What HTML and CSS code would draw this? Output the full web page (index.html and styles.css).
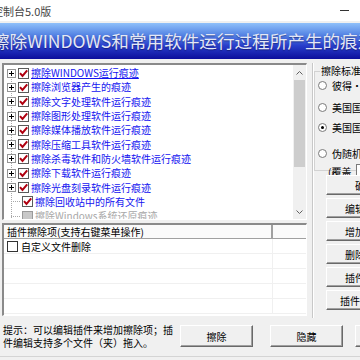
FILE: index.html
```html
<!DOCTYPE html>
<html lang="zh-CN">
<head>
    <meta charset="UTF-8">
    <title>控制台5.0版</title>
    <link rel="stylesheet" href="styles.css">
</head>
<body>
    <div class="titlebar">
        <span class="title">控制台5.0版</span>
        <span class="minimize"></span>
    </div>

    <div class="banner">
        <span class="banner-text">擦除WINDOWS和常用软件运行过程所产生的痕迹</span>
    </div>

    <div class="main">
        <div class="left">
            <div class="tree">
                <div class="tree-items">
                    <div class="node"><span class="expander"></span><svg class="check" width="11" height="11" viewBox="0 0 11 11"><rect x="0.5" y="0.5" width="10" height="10" fill="#fff" stroke="#5a5a5a"/><path d="M2 5.2 L4.5 8 L9.2 2.4" fill="none" stroke="#b00010" stroke-width="2"/></svg><span class="label hot">擦除WINDOWS运行痕迹</span></div>
                    <div class="node"><span class="expander"></span><svg class="check" width="11" height="11" viewBox="0 0 11 11"><rect x="0.5" y="0.5" width="10" height="10" fill="#fff" stroke="#5a5a5a"/><path d="M2 5.2 L4.5 8 L9.2 2.4" fill="none" stroke="#b00010" stroke-width="2"/></svg><span class="label">擦除浏览器产生的痕迹</span></div>
                    <div class="node"><span class="expander"></span><svg class="check" width="11" height="11" viewBox="0 0 11 11"><rect x="0.5" y="0.5" width="10" height="10" fill="#fff" stroke="#5a5a5a"/><path d="M2 5.2 L4.5 8 L9.2 2.4" fill="none" stroke="#b00010" stroke-width="2"/></svg><span class="label">擦除文字处理软件运行痕迹</span></div>
                    <div class="node"><span class="expander"></span><svg class="check" width="11" height="11" viewBox="0 0 11 11"><rect x="0.5" y="0.5" width="10" height="10" fill="#fff" stroke="#5a5a5a"/><path d="M2 5.2 L4.5 8 L9.2 2.4" fill="none" stroke="#b00010" stroke-width="2"/></svg><span class="label">擦除图形处理软件运行痕迹</span></div>
                    <div class="node"><span class="expander"></span><svg class="check" width="11" height="11" viewBox="0 0 11 11"><rect x="0.5" y="0.5" width="10" height="10" fill="#fff" stroke="#5a5a5a"/><path d="M2 5.2 L4.5 8 L9.2 2.4" fill="none" stroke="#b00010" stroke-width="2"/></svg><span class="label">擦除媒体播放软件运行痕迹</span></div>
                    <div class="node"><span class="expander"></span><svg class="check" width="11" height="11" viewBox="0 0 11 11"><rect x="0.5" y="0.5" width="10" height="10" fill="#fff" stroke="#5a5a5a"/><path d="M2 5.2 L4.5 8 L9.2 2.4" fill="none" stroke="#b00010" stroke-width="2"/></svg><span class="label">擦除压缩工具软件运行痕迹</span></div>
                    <div class="node"><span class="expander"></span><svg class="check" width="11" height="11" viewBox="0 0 11 11"><rect x="0.5" y="0.5" width="10" height="10" fill="#fff" stroke="#5a5a5a"/><path d="M2 5.2 L4.5 8 L9.2 2.4" fill="none" stroke="#b00010" stroke-width="2"/></svg><span class="label">擦除杀毒软件和防火墙软件运行痕迹</span></div>
                    <div class="node"><span class="expander"></span><svg class="check" width="11" height="11" viewBox="0 0 11 11"><rect x="0.5" y="0.5" width="10" height="10" fill="#fff" stroke="#5a5a5a"/><path d="M2 5.2 L4.5 8 L9.2 2.4" fill="none" stroke="#b00010" stroke-width="2"/></svg><span class="label">擦除下载软件运行痕迹</span></div>
                    <div class="node"><span class="expander"></span><svg class="check" width="11" height="11" viewBox="0 0 11 11"><rect x="0.5" y="0.5" width="10" height="10" fill="#fff" stroke="#5a5a5a"/><path d="M2 5.2 L4.5 8 L9.2 2.4" fill="none" stroke="#b00010" stroke-width="2"/></svg><span class="label">擦除光盘刻录软件运行痕迹</span></div>
                    <div class="node"><span class="stub"></span><svg class="check" width="11" height="11" viewBox="0 0 11 11"><rect x="0.5" y="0.5" width="10" height="10" fill="#fff" stroke="#5a5a5a"/><path d="M2 5.2 L4.5 8 L9.2 2.4" fill="none" stroke="#b00010" stroke-width="2"/></svg><span class="label">擦除回收站中的所有文件</span></div>
                    <div class="node"><span class="stub"></span><svg class="check" width="11" height="11" viewBox="0 0 11 11"><rect x="0.5" y="0.5" width="10" height="10" fill="#c8c8c8" stroke="#9a9a9a"/></svg><span class="label disabled">擦除Windows系统还原痕迹</span></div>
                </div>
                <div class="scrollbar">
                    <div class="arrow"><svg width="7" height="4" viewBox="0 0 7 4"><path d="M0.5 3.5 L3.5 0.5 L6.5 3.5" fill="none" stroke="#606060"/></svg></div>
                    <div class="thumb"></div>
                    <div class="track"></div>
                    <div class="arrow"><svg width="7" height="4" viewBox="0 0 7 4"><path d="M0.5 0.5 L3.5 3.5 L6.5 0.5" fill="none" stroke="#606060"/></svg></div>
                </div>
            </div>

            <div class="plugin-list">
                <div class="list-header">
                    <div class="col-name">插件擦除项(支持右键菜单操作)</div>
                    <div class="col-extra"></div>
                </div>
                <div class="list-row">
                    <div class="col-name"><span class="box"></span>自定义文件删除</div>
                    <div class="col-extra"></div>
                </div>
                <div class="list-row"><div class="col-name"></div><div class="col-extra"></div></div>
                <div class="list-row"><div class="col-name"></div><div class="col-extra"></div></div>
                <div class="list-row"><div class="col-name"></div><div class="col-extra"></div></div>
                <div class="list-row"><div class="col-name"></div><div class="col-extra"></div></div>
            </div>
        </div>

        <div class="right">
            <fieldset class="group">
                <legend>擦除标准</legend>
                <div class="radio r1"><span class="dot"></span>彼得·古特曼(35次)</div>
                <div class="radio r2"><span class="dot"></span>美国国防部DoD 5220.22-M</div>
                <div class="radio r3"><span class="dot on"></span>美国国家安全局(3次)</div>
                <div class="radio r4"><span class="dot"></span>伪随机数据</div>
                <div class="cover">(覆盖 <span class="count"></span></div>
            </fieldset>

            <div class="side-buttons">
                <button class="btn side">确定</button>
                <button class="btn side">编辑插件</button>
                <button class="btn side">增加插件</button>
                <button class="btn side">删除插件</button>
                <button class="btn side">插件目录</button>
                <button class="btn side">插件编辑器</button>
            </div>
        </div>
    </div>

    <div class="bottom">
        <p class="hint">提示：可以编辑插件来增加擦除项；插件编辑支持多个文件（夹）拖入。</p>
        <button class="btn wide">擦除</button>
        <button class="btn wide">隐藏</button>
        <button class="btn wide">退出</button>
    </div>
    <div class="statusbar"></div>
</body>
</html>
```

FILE: styles.css
```css
body {
    margin: 0;
    width: 360px;
    height: 360px;
    overflow: hidden;
    background-color: #f0f0f0;
    font-family: "Noto Sans CJK SC", "Liberation Sans", sans-serif;
    font-size: 10px;
    color: #000;
}

.titlebar {
    height: 21px;
    background: #fff;
    display: flex;
    align-items: center;
    justify-content: space-between;
    overflow: hidden;
}

.title {
    margin-left: -8px;
    font-size: 11px;
    color: #444;
}

.minimize {
    width: 9px;
    height: 1px;
    background: #333;
    margin-right: 11px;
}

.banner {
    margin-top: 2px;
    height: 36px;
    background: linear-gradient(#8fc0fa 0%, #5a8ae6 30%, #2a40cc 62%, #0c0e9c 100%);
    overflow: hidden;
    white-space: nowrap;
}

.banner-text {
    display: block;
    margin-left: -8px;
    font-size: 17.6px;
    line-height: 36px;
    color: #e4e8f6;
    text-shadow: 0 1px 1px rgba(0,0,40,0.4);
}

.main {
    display: flex;
    margin-top: 4px;
    height: 255px;
}

.left {
    width: 305px;
    margin-left: 2px;
}

.tree {
    display: flex;
    height: 154px;
    border-top: 2px solid #8a8a8a;
    border-left: 2px solid #8a8a8a;
    border-right: 1px solid #fff;
    border-bottom: 1px solid #fff;
}

.tree-items {
    flex: 1;
    padding-top: 1px;
    overflow: hidden;
    background-color: #fff;
    background-image: repeating-linear-gradient(to bottom, #a8a8a8 0 1px, transparent 1px 2px);
    background-size: 1px 150px;
    background-position: 7px 4px;
    background-repeat: no-repeat;
}

.node {
    display: flex;
    align-items: center;
    height: 14.3px;
    white-space: nowrap;
}

.expander {
    width: 7px;
    height: 7px;
    margin-left: 3px;
    border: 1px solid #949494;
    background: #fff linear-gradient(#000, #000) center / 5px 1px no-repeat;
    position: relative;
}

.expander::after {
    content: "";
    position: absolute;
    left: 3px;
    top: 1px;
    width: 1px;
    height: 5px;
    background: #000;
}

.stub {
    width: 9px;
    margin-left: 7px;
    border-top: 1px dotted #a8a8a8;
}

.check {
    margin-left: 2px;
    flex: none;
}

.label {
    margin-left: 2px;
    color: #1414f0;
    line-height: 14px;
}

.hot {
    text-decoration: underline;
}

.disabled {
    color: #a8a8a8;
}

.scrollbar {
    width: 13px;
    display: flex;
    flex-direction: column;
    background: #f0f0f0;
}

.arrow {
    height: 15px;
    display: flex;
    align-items: center;
    justify-content: center;
}

.thumb {
    height: 87px;
    margin: 0 1px;
    background: #cdcdcd;
}

.track {
    flex: 1;
}

.plugin-list {
    margin-top: 3px;
    height: 90px;
    background: #fff;
    border-top: 2px solid #8a8a8a;
    border-left: 2px solid #8a8a8a;
    border-right: 1px solid #fff;
    border-bottom: 1px solid #fff;
    overflow: hidden;
}

.list-header {
    display: flex;
    height: 13px;
    line-height: 13px;
    background: #fafafa;
    border-bottom: 1px solid #a0a0a0;
}

.list-header .col-name {
    border-right: 2px solid #a0a0a0;
}

.col-name {
    width: 264px;
    padding-left: 3px;
    display: flex;
    align-items: center;
    white-space: nowrap;
}

.col-extra {
    flex: 1;
}

.list-row {
    display: flex;
    height: 14px;
    border-bottom: 1px solid #f0f0f0;
}

.list-row .col-name {
    border-right: 1px solid #f0f0f0;
    width: 265px;
}

.box {
    width: 9px;
    height: 9px;
    border: 1px solid #333;
    background: #fff;
    margin-right: 3px;
}

.right {
    flex: 1;
    margin-left: 5px;
    border-left: 1px solid #c8c8c8;
    box-shadow: inset 1px 0 #fff;
    overflow: hidden;
}

.group {
    margin: 2px 0 0 1px;
    padding: 0 0 0 3px;
    width: 100px;
    height: 104px;
    border: 1px solid #d2d2d2;
}

.group legend {
    padding: 0 1px;
    margin-left: 2px;
    line-height: 12px;
}

.radio {
    display: flex;
    align-items: center;
    height: 14px;
    white-space: nowrap;
}

.r1 { margin-top: 1px; }
.r2 { margin-top: 8px; }
.r3 { margin-top: 6px; }
.r4 { margin-top: 12px; }

.dot {
    width: 7px;
    height: 7px;
    border: 1px solid #7a7a7a;
    border-radius: 50%;
    background: #fff;
    margin-right: 5px;
    display: flex;
    align-items: center;
    justify-content: center;
}

.dot.on::after {
    content: "";
    width: 3px;
    height: 3px;
    border-radius: 50%;
    background: #000;
}

.cover {
    margin: 4px 0 0 10px;
    height: 14px;
    display: flex;
    align-items: center;
    white-space: nowrap;
}

.count {
    width: 30px;
    height: 12px;
    margin-left: 5px;
    border: 1px solid #7a7a7a;
    background: #fff;
}

.side-buttons {
    display: flex;
    flex-direction: column;
    gap: 3px;
    margin: 4px 0 0 13px;
}

.btn {
    font-family: inherit;
    font-size: 10px;
    color: #000;
    background: #f0f0f0;
    border-top: 1px solid #fff;
    border-left: 1px solid #fff;
    border-right: 1px solid #696969;
    border-bottom: 1px solid #696969;
    box-shadow: inset -1px -1px #a0a0a0;
    padding: 0;
    white-space: nowrap;
}

.side {
    width: 78px;
    height: 20px;
}

.bottom {
    display: flex;
    align-items: flex-start;
    height: 38px;
}

.hint {
    flex: none;
    width: 172px;
    margin: 5px 0 0 3px;
    line-height: 13px;
}

.wide {
    flex: none;
    width: 73px;
    height: 22px;
    margin-top: 7px;
    margin-left: 5px;
}

.wide + .wide {
    margin-left: 17px;
}

.wide + .wide + .wide {
    margin-left: 12px;
}

.statusbar {
    border-top: 1px solid #d4d4d4;
    height: 3px;
}
```
